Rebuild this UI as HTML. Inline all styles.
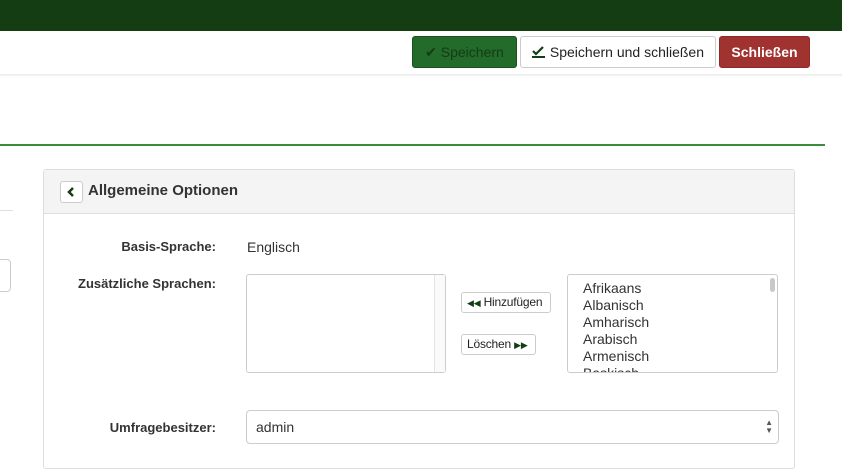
<!DOCTYPE html>
<html><head><style>
body{margin:0;width:842px;height:449px;overflow:hidden;background:#fff;font-family:"Liberation Sans",sans-serif;font-size:14px;color:#333;position:relative}
.a{position:absolute}
.btn{position:absolute;top:36px;height:32px;box-sizing:border-box;border-radius:3px;font-size:14px;line-height:30px;text-align:center}
.sb{position:absolute;height:21px;box-sizing:border-box;border:1px solid #ccc;border-radius:3px;font-size:12px;line-height:19px;background:#fff;color:#222;padding:0 5px;letter-spacing:-0.2px}
.g{color:#143d14;font-size:9px}
</style></head><body>
<div class="a" style="left:0;top:0;width:842px;height:31px;background:#143d14"></div>
<div class="a" style="left:0;top:74px;width:842px;height:3px;background:linear-gradient(#e8e8e8,#fff)"></div>
<div class="btn" style="left:412px;width:105px;background:#236b2a;border:1px solid #1b5220;color:#173a17">✔ Speichern</div>
<div class="btn" style="left:520px;width:196px;background:#fff;border:1px solid #ccc;color:#222"><svg width="14" height="12" viewBox="0 0 14 12" style="vertical-align:-1px"><path d="M1 5l3 3 7-7" stroke="#143d14" stroke-width="2.2" fill="none"/><rect x="0" y="10" width="13" height="2" fill="#143d14"/></svg> Speichern und schließen</div>
<div class="btn" style="left:719px;width:91px;background:#a03330;border:1px solid #8e2b28;color:#fff;font-weight:bold">Schließen</div>
<div class="a" style="left:0;top:144px;width:825px;height:2px;background:#3d8b3d"></div>
<div class="a" style="left:0;top:210px;width:13px;height:1px;background:#ddd"></div>
<div class="a" style="left:-4px;top:259px;width:15px;height:33px;border:1px solid #ccc;border-radius:4px;box-sizing:border-box"></div>
<div class="a" style="left:43px;top:169px;width:752px;height:300px;border:1px solid #ddd;border-radius:3px;box-sizing:border-box"></div>
<div class="a" style="left:44px;top:170px;width:750px;height:43px;background:#f4f4f4;border-bottom:1px solid #ddd"></div>
<div class="a" style="left:60px;top:181px;width:23px;height:22px;border:1px solid #ccc;border-radius:3px;background:#fff;box-sizing:border-box"><svg width="21" height="20" viewBox="0 0 21 20"><path d="M12 6l-4 4 4 4" stroke="#143d14" stroke-width="2.5" fill="none"/></svg></div>
<div class="a" style="left:88px;top:181px;font-size:15px;font-weight:bold;color:#333;line-height:20px">Allgemeine Optionen</div>
<div class="a" style="left:0;width:216px;top:239px;text-align:right;font-weight:bold;font-size:13px">Basis-Sprache:</div>
<div class="a" style="left:247px;top:239px;font-size:14px">Englisch</div>
<div class="a" style="left:0;width:216px;top:276px;text-align:right;font-weight:bold;font-size:13px">Zusätzliche Sprachen:</div>
<div class="a" style="left:246px;top:274px;width:200px;height:99px;border:1px solid #ccc;border-radius:3px;box-sizing:border-box"><div class="a" style="right:0;top:0;width:10px;height:97px;border-left:1px solid #e5e5e5;background:#fafafa"></div></div>
<div class="sb" style="left:461px;top:292px;width:90px"><span class="g">◀◀</span> Hinzufügen</div>
<div class="sb" style="left:461px;top:334px;width:75px">Löschen <span class="g">▶▶</span></div>
<div class="a" style="left:567px;top:274px;width:211px;height:99px;border:1px solid #ccc;border-radius:3px;box-sizing:border-box;overflow:hidden;padding:5px 0 0 15px;line-height:17px;font-size:14px">Afrikaans<br>Albanisch<br>Amharisch<br>Arabisch<br>Armenisch<br>Baskisch<div class="a" style="right:2px;top:3px;width:5px;height:14px;background:#c8c8c8;border-radius:3px"></div></div>
<div class="a" style="left:0;width:216px;top:420px;text-align:right;font-weight:bold;font-size:13px">Umfragebesitzer:</div>
<div class="a" style="left:246px;top:410px;width:533px;height:34px;border:1px solid #ccc;border-radius:4px;box-sizing:border-box;padding:8px 9px;font-size:14px">admin<span style="position:absolute;right:5px;top:8px;font-size:8px;line-height:8px;color:#555">▲<br>▼</span></div>
</body></html>
